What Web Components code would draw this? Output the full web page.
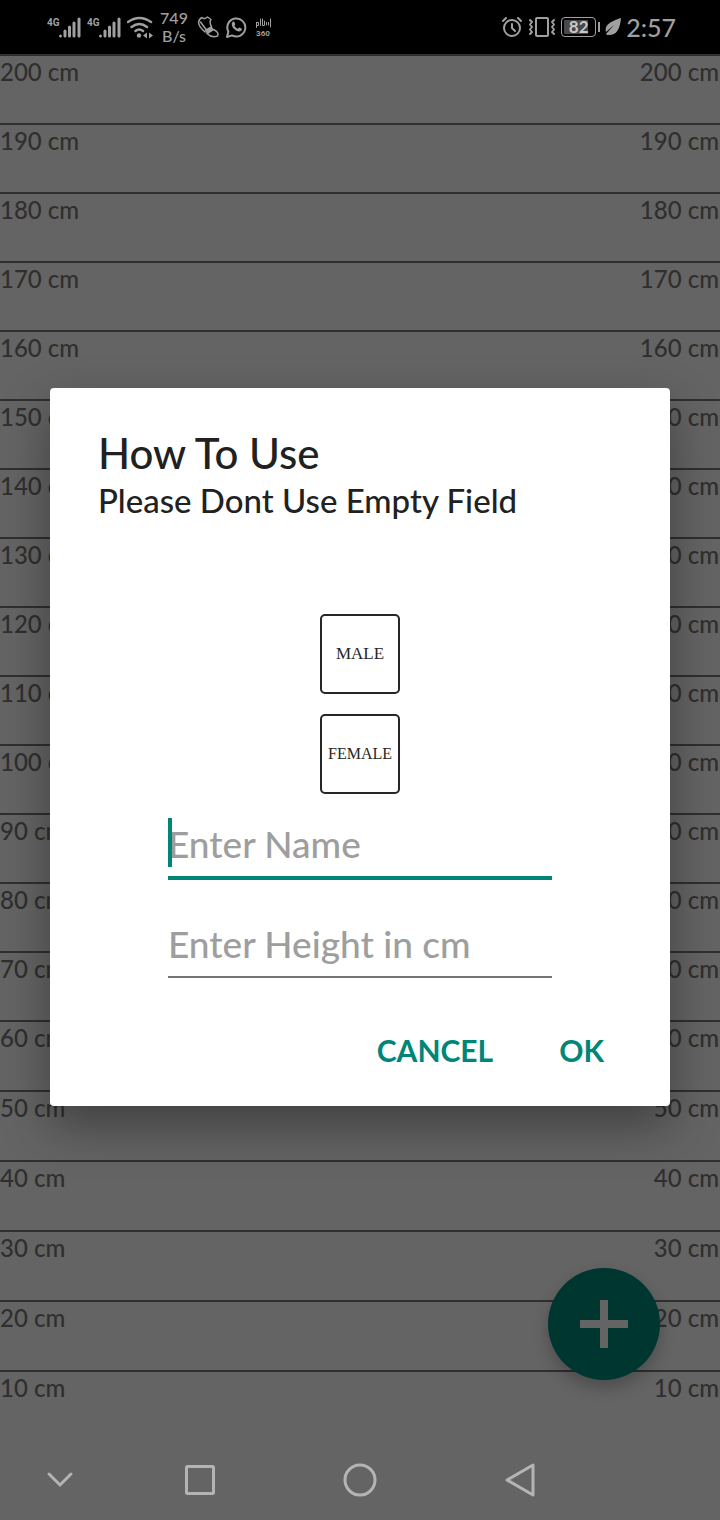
<!DOCTYPE html>
<html lang="en">
<head>
<meta charset="utf-8">
<meta name="viewport" content="width=device-width, initial-scale=1">
<title>Height Comparison</title>
<style>
  body {
    margin: 0;
    background: #646464;
    font-family: Lato, "Noto Sans", sans-serif;
  }
</style>
</head>
<body>
<height-app></height-app>

<script>
class StatusBar extends HTMLElement {
  static styles = `
    :host {
      display: flex;
      justify-content: space-between;
      align-items: center;
      box-sizing: border-box;
      height: 54px;
      padding: 0 44px 0 47px;
      background: #000;
      color: #a0a0a0;
    }

    .group {
      display: flex;
      align-items: center;
      gap: 6px;
    }

    .right { gap: 5px; }

    svg {
      display: block;
      fill: none;
      stroke: currentColor;
      stroke-width: 2;
      stroke-linecap: round;
      stroke-linejoin: round;
    }

    svg text {
      fill: currentColor;
      stroke: none;
      font-family: Roboto, sans-serif;
      font-weight: bold;
    }

    .fill {
      fill: currentColor;
      stroke: none;
    }

    .speed {
      width: 30px;
      margin-right: 2px;
      font-size: 16px;
      line-height: 18px;
      font-weight: 500;
      text-align: center;
    }

    .battery {
      display: flex;
      align-items: center;
    }

    .level {
      box-sizing: border-box;
      width: 35px;
      height: 20px;
      padding: 2px;
      border: 1px solid #a0a0a0;
      border-radius: 4px;
      background: linear-gradient(90deg, #484848 82%, #000 82%) content-box;
      color: #c8c8c8;
      font-size: 17px;
      line-height: 14px;
      font-weight: bold;
      text-align: center;
    }

    .tip {
      width: 2px;
      height: 10px;
      margin-left: 2px;
      background: #a0a0a0;
    }

    .time {
      font-size: 25px;
      line-height: 32px;
      font-weight: 500;
    }
  `;

  constructor() {
    super();
    this.attachShadow({ mode: "open" });
    this.render();
  }

  signal() {
    return `
      <svg width="34" height="26" viewBox="0 0 34 26" aria-label="4G signal">
        <text x="0" y="12" font-size="10">4G</text>
        <path d="M13.500 22v0M18 17v5M22.500 13v9M27 9v13M32 5v17" stroke-width="3"/>
      </svg>`;
  }

  render() {
    this.shadowRoot.innerHTML = `
      <style>${StatusBar.styles}</style>
      <div class="group">
        ${this.signal()}
        ${this.signal()}
        <svg width="26" height="26" viewBox="0 0 26 26">
          <path d="M1 8q11.500-8 23 0M4.500 13q8-6 15.500 0M8.500 17q3.500-3 7.500 0" stroke-width="2.500"/>
          <circle class="fill" cx="12" cy="21.500" r="2.200"/>
          <path class="fill" d="M20 18.500v6l-4-3zM22 18.500v6l4-3z"/>
        </svg>
        <div class="speed">749<br>B/s</div>
        <svg width="22" height="24" viewBox="0 0 22 24">
          <path d="M1.500 7.500Q2 4 5 2.500q2 2 4 .5l1.500-1 3.500 2.500q-2 3 .5 7M1.500 7.500Q2 12 8 17M3.500 7l6 8" stroke-width="1.500"/>
          <path class="fill" d="M7.500 15l7-4 2 3.500-6.500 4z"/>
          <path d="M10 18.500l6.500-4c3.500 1.500 5.500 4 4 6.500-4 1.500-8 0-10.500-2.500z" stroke-width="1.500"/>
        </svg>
        <svg width="22" height="24" viewBox="0 0 22 24">
          <path d="M2 22l1.400-5.300a9 9 0 1 1 3.700 3.700z"/>
          <path class="fill" d="M7.300 7.200c.8-1 1.800-.9 2.200 0l.7 1.800c.2.700-.9 1.400-.8 1.800.8 1.500 1.900 2.400 3.400 3 .6 0 1.100-1.500 1.700-1.200l2 1c.8.500.2 2-.8 2.500-1.600.8-4 .1-6-1.600-2-1.700-3.800-4.800-2.400-7.300z"/>
        </svg>
        <svg width="20" height="24" viewBox="0 0 20 24">
          <path d="M3.500 7.500v5M3.500 7.500h2v3h-2M7.500 4v6.500M9.500 4v6.500h2V6M13.500 10V7.500M15.500 10V7.500M17.500 4v8" stroke-width="1"/>
          <text x="10" y="21" font-size="8" text-anchor="middle">360</text>
        </svg>
      </div>
      <div class="group right">
        <svg width="22" height="22" viewBox="0 0 22 22">
          <circle cx="11" cy="12" r="8"/>
          <path d="M11 8v4l3 3M2 5l3-3M20 5l-3-3"/>
        </svg>
        <svg width="28" height="22" viewBox="0 0 28 22">
          <rect x="8" y="2" width="12" height="18" rx="1"/>
          <path d="M2 4l2 2-2 2.500 2 2.500-2 2.500 2 2.500-2 2M26 4l-2 2 2 2.500-2 2.500 2 2.500-2 2.500 2 2"/>
        </svg>
        <div class="battery">
          <div class="level">82</div>
          <div class="tip"></div>
        </div>
        <svg width="16" height="20" viewBox="0 0 16 20">
          <path class="fill" d="M16 1C6 4-1 8 1 15l8-7-8 9 1 1c9 1 13-5 14-17z"/>
        </svg>
        <div class="time">2:57</div>
      </div>
    `;
  }
}

class HeightRow extends HTMLElement {
  static styles = `
    :host {
      display: flex;
      justify-content: space-between;
      box-sizing: border-box;
      height: 69px;
      padding-right: 1px;
      border-top: 2px solid #2f2f2f;
      color: #2f2f2f;
      font-size: 24px;
      line-height: 32px;
      font-weight: 500;
    }

    :host([tall]) { height: 70px; }
  `;

  connectedCallback() {
    const root = this.attachShadow({ mode: "open" });
    root.innerHTML = `
      <style>${HeightRow.styles}</style>
      <span><slot></slot></span>
      <span>${this.textContent}</span>
    `;
  }
}

class HeightScale extends HTMLElement {
  constructor() {
    super();
    this.attachShadow({ mode: "open" });
    let rows = "";
    for (let cm = 200; cm > 0; cm -= 10) {
      rows += `<height-row ${cm <= 60 ? "tall" : ""}>${cm} cm</height-row>`;
    }
    this.shadowRoot.innerHTML = `<style>:host { display: block; }</style>${rows}`;
  }
}

class AddButton extends HTMLElement {
  static styles = `
    :host { display: block; }

    button {
      display: grid;
      place-items: center;
      width: 112px;
      height: 112px;
      padding: 0;
      border: 0;
      border-radius: 50%;
      background: #003630;
      box-shadow: 0 8px 16px rgba(0, 0, 0, 0.24);
    }
  `;

  constructor() {
    super();
    this.attachShadow({ mode: "open" });
    this.shadowRoot.innerHTML = `
      <style>${AddButton.styles}</style>
      <button aria-label="Add">
        <svg width="48" height="48" viewBox="0 0 48 48">
          <path d="M0 24h48M24 0v48" stroke="#646464" stroke-width="8"/>
        </svg>
      </button>
    `;
  }
}

class GenderButton extends HTMLElement {
  static styles = `
    :host { display: block; }

    button {
      display: block;
      width: 80px;
      height: 80px;
      padding: 0;
      border: 2px solid #262626;
      border-radius: 5px;
      background: #fff;
      color: #262626;
      font: 17px "Liberation Serif", serif;
    }

    :host([small]) button { font-size: 16px; }
  `;

  constructor() {
    super();
    this.attachShadow({ mode: "open" });
    this.shadowRoot.innerHTML = `
      <style>${GenderButton.styles}</style>
      <button><slot></slot></button>
    `;
  }
}

class TextField extends HTMLElement {
  static styles = `
    :host {
      display: block;
      position: relative;
      box-sizing: border-box;
      height: 62px;
      border-bottom: 2px solid #757575;
    }

    :host([active]) {
      height: 64px;
      border-bottom: 4px solid #008577;
    }

    input {
      display: block;
      box-sizing: border-box;
      width: 100%;
      height: 54px;
      padding: 0;
      border: 0;
      outline: 0;
      background: none;
      color: #212121;
      font: 500 37px Lato, "Noto Sans", sans-serif;
    }

    input::placeholder { color: #9e9e9e; }

    .caret { display: none; }

    :host([active]) .caret {
      display: block;
      position: absolute;
      left: 0;
      top: 2px;
      width: 4px;
      height: 49px;
      background: #008577;
    }
  `;

  connectedCallback() {
    const label = this.getAttribute("label");
    const root = this.attachShadow({ mode: "open" });
    root.innerHTML = `
      <style>${TextField.styles}</style>
      <input type="text" aria-label="${label}" placeholder="${label}">
      <span class="caret"></span>
    `;
  }
}

class EntryDialog extends HTMLElement {
  static styles = `
    :host {
      display: block;
      box-sizing: border-box;
      padding: 40px 48px 20px;
      border-radius: 4px;
      background: #fff;
      color: #212121;
      box-shadow: 0 20px 48px rgba(0, 0, 0, 0.36);
    }

    h1, p {
      margin: 0;
      font-weight: 500;
    }

    h1 {
      font-size: 42px;
      line-height: 50px;
    }

    p {
      font-size: 33px;
      line-height: 44px;
    }

    .genders {
      display: grid;
      justify-content: center;
      gap: 20px;
      padding-top: 92px;
    }

    .fields {
      display: grid;
      gap: 36px;
      padding: 22px 70px 0;
    }

    .actions {
      display: flex;
      justify-content: flex-end;
      gap: 34px;
      padding: 36px 2px 0 0;
    }

    .actions button {
      height: 72px;
      padding: 0 16px;
      border: 0;
      background: none;
      color: #008577;
      font: bold 30px Lato, "Noto Sans", sans-serif;
    }
  `;

  constructor() {
    super();
    this.attachShadow({ mode: "open" });
    this.shadowRoot.innerHTML = `
      <style>${EntryDialog.styles}</style>
      <h1>How To Use</h1>
      <p>Please Dont Use Empty Field</p>
      <div class="genders">
        <gender-button>MALE</gender-button>
        <gender-button small>FEMALE</gender-button>
      </div>
      <div class="fields">
        <text-field label="Enter Name" active></text-field>
        <text-field label="Enter Height in cm"></text-field>
      </div>
      <div class="actions">
        <button>CANCEL</button>
        <button>OK</button>
      </div>
    `;
  }
}

class NavBar extends HTMLElement {
  static styles = `
    :host {
      display: block;
      color: #b4b4b4;
    }

    nav {
      display: grid;
      grid-template-columns: 3fr 4fr 4fr 4fr 3fr;
      height: 80px;
    }

    button {
      display: grid;
      place-items: center;
      padding: 0;
      border: 0;
      background: none;
      color: inherit;
    }

    svg {
      fill: none;
      stroke: currentColor;
      stroke-width: 3;
      stroke-linecap: round;
      stroke-linejoin: round;
    }
  `;

  icon(label, shape) {
    return `
      <button aria-label="${label}">
        <svg width="36" height="36" viewBox="0 0 36 36">${shape}</svg>
      </button>`;
  }

  constructor() {
    super();
    this.attachShadow({ mode: "open" });
    this.shadowRoot.innerHTML = `
      <style>${NavBar.styles}</style>
      <nav>
        ${this.icon("Hide", '<path d="M7 12l11 11 11-11" stroke-linejoin="miter"/>')}
        ${this.icon("Recent apps", '<rect x="4.500" y="4.500" width="27" height="27" rx="1"/>')}
        ${this.icon("Home", '<circle cx="18" cy="18" r="15"/>')}
        ${this.icon("Back", '<path d="M31 3v30L5 18z"/>')}
      </nav>
    `;
  }
}

class HeightApp extends HTMLElement {
  static styles = `
    :host {
      display: flex;
      flex-direction: column;
      min-height: 100vh;
    }

    main {
      position: relative;
      flex: 1;
    }

    add-button {
      position: absolute;
      right: 60px;
      bottom: 60px;
    }

    .overlay {
      position: absolute;
      inset: 0;
      display: grid;
      align-items: center;
      padding: 0 50px;
    }
  `;

  constructor() {
    super();
    this.attachShadow({ mode: "open" });
    this.shadowRoot.innerHTML = `
      <style>${HeightApp.styles}</style>
      <status-bar></status-bar>
      <main>
        <height-scale></height-scale>
        <add-button></add-button>
        <div class="overlay"><entry-dialog role="dialog"></entry-dialog></div>
      </main>
      <nav-bar></nav-bar>
    `;
  }
}

customElements.define("status-bar", StatusBar);
customElements.define("height-row", HeightRow);
customElements.define("height-scale", HeightScale);
customElements.define("add-button", AddButton);
customElements.define("gender-button", GenderButton);
customElements.define("text-field", TextField);
customElements.define("entry-dialog", EntryDialog);
customElements.define("nav-bar", NavBar);
customElements.define("height-app", HeightApp);
</script>
</body>
</html>
